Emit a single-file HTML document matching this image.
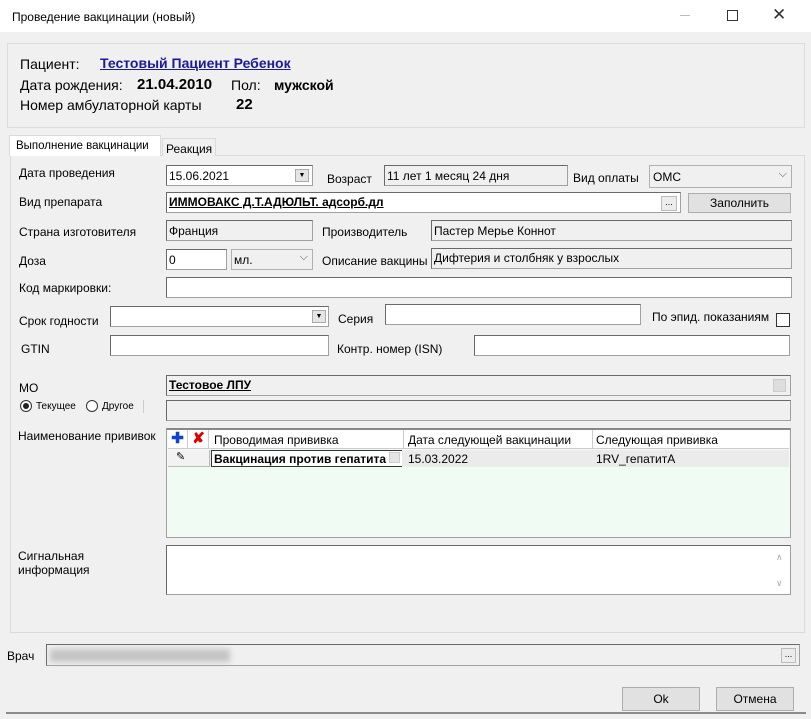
<!DOCTYPE html>
<html><head><meta charset="utf-8"><style>
*{box-sizing:border-box;margin:0;padding:0}
body{width:811px;height:719px;background:#f0f0f0;font-family:"Liberation Sans",sans-serif;font-size:12px;color:#000;position:relative;overflow:hidden}
.a{position:absolute;white-space:nowrap}
.tb{position:absolute;left:0;top:0;width:811px;height:32px;background:#fff}
.in{position:absolute;background:#fff;border:1px solid #a0a0a0;border-top-color:#696969;border-left-color:#696969;height:21px;font-size:12px;padding:3px 2px;white-space:nowrap;overflow:hidden}
.ro{background:#f0f0f0}
.btn{position:absolute;background:#e1e1e1;border:1px solid #adadad;text-align:center;font-size:12px}
.lbl{position:absolute;font-size:12px;white-space:nowrap}
</style></head><body>
<div class="tb"></div>
<div class="a" style="left:12px;top:10px;font-size:12px">Проведение вакцинации (новый)</div>
<div class="a" style="left:680px;top:15px;width:10px;height:1px;background:#bbb"></div>
<div class="a" style="left:727px;top:10px;width:11px;height:11px;border:1px solid #333"></div>
<div class="a" style="left:772px;top:5px;font-size:17px;color:#333">✕</div>

<div class="a" style="left:7px;top:43px;width:798px;height:85px;border:1px solid #dcdcdc"></div>
<div class="lbl" style="left:20px;top:56px;font-size:14px">Пациент:</div>
<div class="lbl" style="left:100px;top:55px;font-size:14px;font-weight:bold;color:#1a1a9a;text-decoration:underline">Тестовый Пациент Ребенок</div>
<div class="lbl" style="left:20px;top:77px;font-size:14px">Дата рождения:</div>
<div class="lbl" style="left:137px;top:76px;font-size:15px;font-weight:bold">21.04.2010</div>
<div class="lbl" style="left:231px;top:77px;font-size:14px">Пол:</div>
<div class="lbl" style="left:274px;top:77px;font-size:14px;font-weight:bold">мужской</div>
<div class="lbl" style="left:20px;top:97px;font-size:14px">Номер амбулаторной карты</div>
<div class="lbl" style="left:236px;top:96px;font-size:15px;font-weight:bold">22</div>

<div class="a" style="left:10px;top:155px;width:795px;height:478px;border:1px solid #dadada;background:#f0f0f0"></div>
<div class="a" style="left:162px;top:138px;width:54px;height:18px;border:1px solid #dadada;border-bottom:none;background:#f0f0f0"></div>
<div class="lbl" style="left:166px;top:142px">Реакция</div>
<div class="a" style="left:9px;top:135px;width:152px;height:21px;border:1px solid #dadada;border-bottom:none;background:#fff"></div>
<div class="lbl" style="left:16px;top:140px;font-size:11.5px">Выполнение вакцинации</div>

<div class="lbl" style="left:19px;top:166px">Дата проведения</div>
<div class="in" style="left:166px;top:165px;width:147px">15.06.2021</div>
<div class="a" style="left:295px;top:169px;width:14px;height:13px;background:#e5e5e5;border:1px solid #aaa;font-size:7px;text-align:center;line-height:12px">▼</div>
<div class="lbl" style="left:327px;top:172px">Возраст</div>
<div class="in ro" style="left:384px;top:165px;width:184px">11 лет 1 месяц 24 дня</div>
<div class="lbl" style="left:573px;top:171px">Вид оплаты</div>
<div class="in ro" style="left:649px;top:165px;width:143px;height:23px;border:1px solid #b0b0b0;padding:4px 3px">ОМС<span style="position:absolute;right:4px;top:2px;font-size:11px;color:#555">⌵</span></div>

<div class="lbl" style="left:19px;top:195px">Вид препарата</div>
<div class="in" style="left:166px;top:192px;width:515px;font-weight:bold;text-decoration:underline;padding-top:2px">ИММОВАКС Д.Т.АДЮЛЬТ. адсорб.дл</div>
<div class="a" style="left:661px;top:196px;width:16px;height:15px;background:#ececec;border:1px solid #bbb;font-size:9px;text-align:center;line-height:11px">...</div>
<div class="btn" style="left:688px;top:193px;width:103px;height:20px;line-height:18px">Заполнить</div>

<div class="lbl" style="left:19px;top:225px">Страна изготовителя</div>
<div class="in ro" style="left:166px;top:220px;width:147px">Франция</div>
<div class="lbl" style="left:322px;top:225px">Производитель</div>
<div class="in ro" style="left:431px;top:220px;width:361px">Пастер Мерье Коннот</div>

<div class="lbl" style="left:19px;top:254px">Доза</div>
<div class="in" style="left:166px;top:249px;width:61px">0</div>
<div class="in ro" style="left:231px;top:249px;width:82px;border:1px solid #b0b0b0">мл.<span style="position:absolute;right:4px;top:1px;font-size:11px;color:#555">⌵</span></div>
<div class="lbl" style="left:322px;top:254px">Описание вакцины</div>
<div class="in ro" style="left:431px;top:248px;width:361px;padding-top:2px">Дифтерия и столбняк у взрослых</div>

<div class="lbl" style="left:19px;top:281px">Код маркировки:</div>
<div class="in" style="left:166px;top:277px;width:626px"></div>

<div class="lbl" style="left:19px;top:314px">Срок годности</div>
<div class="in" style="left:110px;top:306px;width:219px"></div>
<div class="a" style="left:312px;top:310px;width:14px;height:13px;background:#e5e5e5;border:1px solid #aaa;font-size:7px;text-align:center;line-height:12px">▼</div>
<div class="lbl" style="left:338px;top:312px">Серия</div>
<div class="in" style="left:385px;top:304px;width:256px"></div>
<div class="lbl" style="left:652px;top:310px">По эпид. показаниям</div>
<div class="a" style="left:776px;top:313px;width:14px;height:14px;border:1px solid #333;background:#fff"></div>

<div class="lbl" style="left:21px;top:342px">GTIN</div>
<div class="in" style="left:110px;top:335px;width:219px"></div>
<div class="lbl" style="left:337px;top:342px">Контр. номер (ISN)</div>
<div class="in" style="left:474px;top:335px;width:316px"></div>

<div class="lbl" style="left:19px;top:381px">МО</div>
<div class="in ro" style="left:166px;top:375px;width:625px;font-weight:bold;text-decoration:underline;padding-top:2px">Тестовое ЛПУ</div>
<div class="a" style="left:773px;top:379px;width:13px;height:13px;background:#ddd;border:1px solid #ccc"></div>
<div class="a" style="left:20px;top:400px;width:12px;height:12px;border:1px solid #333;border-radius:50%;background:#fff"></div>
<div class="a" style="left:23px;top:403px;width:6px;height:6px;border-radius:50%;background:#222"></div>
<div class="lbl" style="left:36px;top:401px;font-size:10px">Текущее</div>
<div class="a" style="left:86px;top:400px;width:12px;height:12px;border:1px solid #333;border-radius:50%;background:#fff"></div>
<div class="lbl" style="left:102px;top:401px;font-size:10px">Другое</div>
<div class="a" style="left:143px;top:400px;width:1px;height:13px;background:#ccc"></div>
<div class="in ro" style="left:166px;top:400px;width:625px"></div>

<div class="lbl" style="left:18px;top:429px">Наименование прививок</div>
<div class="a" style="left:166px;top:428px;width:625px;height:110px;border:1px solid #a0a0a0;border-top:2px solid #888;background:#f0fbf4"></div>
<div class="a" style="left:168px;top:430px;width:621px;height:19px;background:#fff;border-bottom:1px solid #ccc"></div>
<div class="a" style="left:168px;top:430px;width:20px;height:19px;border-right:1px solid #ccc;color:#1144cc;font-weight:bold;font-size:15px;text-align:center;line-height:18px">✚</div>
<div class="a" style="left:189px;top:430px;width:20px;height:19px;border-right:1px solid #ccc;color:#d00;font-weight:bold;font-size:15px;text-align:center;line-height:18px">✘</div>
<div class="lbl" style="left:214px;top:433px">Проводимая прививка</div>
<div class="a" style="left:403px;top:430px;width:1px;height:19px;background:#ccc"></div>
<div class="lbl" style="left:408px;top:433px">Дата следующей вакцинации</div>
<div class="a" style="left:592px;top:430px;width:1px;height:19px;background:#ccc"></div>
<div class="lbl" style="left:596px;top:433px">Следующая прививка</div>
<div class="a" style="left:168px;top:450px;width:621px;height:17px;background:#ebebeb"></div>
<div class="a" style="left:168px;top:450px;width:42px;height:17px;background:#f2f2f2;border-right:1px solid #bbb;border-bottom:1px solid #bbb;font-size:11px;padding-left:8px">✎</div>
<div class="a" style="left:211px;top:450px;width:191px;height:17px;background:#fff;border:1px solid #333;border-right:none;font-weight:bold;padding:1px 2px;overflow:hidden;white-space:nowrap">Вакцинация против гепатита</div>
<div class="a" style="left:389px;top:452px;width:11px;height:11px;background:#e5e5e5;border:1px solid #ccc"></div>
<div class="lbl" style="left:408px;top:452px">15.03.2022</div>
<div class="lbl" style="left:596px;top:452px">1RV_гепатитА</div>

<div class="lbl" style="left:18px;top:549px;line-height:14px">Сигнальная<br>информация</div>
<div class="in" style="left:166px;top:545px;width:625px;height:50px"></div>
<div class="lbl" style="left:776px;top:552px;font-size:9px;color:#aaa">∧</div>
<div class="lbl" style="left:776px;top:578px;font-size:9px;color:#aaa">∨</div>

<div class="lbl" style="left:7px;top:649px">Врач</div>
<div class="in ro" style="left:46px;top:644px;width:754px;height:22px"></div>
<div class="a" style="left:50px;top:649px;width:180px;height:13px;background:#c4c4c4;filter:blur(3px)"></div>
<div class="a" style="left:781px;top:648px;width:15px;height:15px;background:#ececec;border:1px solid #bbb;font-size:9px;text-align:center;line-height:11px">...</div>

<div class="btn" style="left:622px;top:687px;width:78px;height:24px;line-height:22px">Ok</div>
<div class="btn" style="left:716px;top:687px;width:78px;height:24px;line-height:22px">Отмена</div>
<div class="a" style="left:6px;top:712px;width:800px;height:2px;background:#8a8a8a"></div>
</body></html>
